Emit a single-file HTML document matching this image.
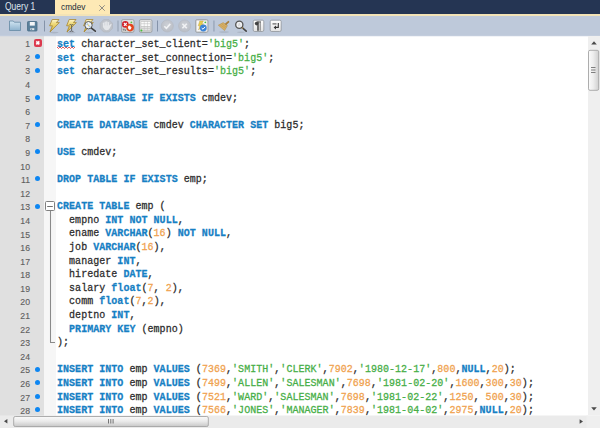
<!DOCTYPE html>
<html><head><meta charset="utf-8">
<style>
*{margin:0;padding:0;box-sizing:border-box}
html,body{width:600px;height:428px;overflow:hidden;background:#fff;position:relative}
body{font-family:"Liberation Sans",sans-serif}
.abs{position:absolute}
#tabbar{left:0;top:0;width:600px;height:14px;background:#253553}
#tab1{left:5px;top:0px;font-size:10px;color:#dfe6ee;line-height:13px;transform:scaleX(0.85);transform-origin:0 0;white-space:nowrap}
#tab2{left:55px;top:0;width:55px;height:14px;background:#fde9b5}
#tab2 .t{position:absolute;left:5.6px;top:0.5px;font-size:9px;color:#222c3a;line-height:13px;transform:scaleX(0.92);transform-origin:0 0}
#tab2 .x{position:absolute;left:44px;top:5px;width:6px;height:6px}
#yline{left:0;top:14px;width:600px;height:2px;background:#f3e3b6}
#toolbar{left:0;top:16px;width:600px;height:20px;background:#bec9da}
#gut1{left:0;top:36px;width:44px;height:380px;background:#e0e0e0}
#gut2{left:44px;top:36px;width:12px;height:380px;background:#f6f6f6}
.nl{position:absolute;left:0;width:30px;text-align:right;font-family:"Liberation Sans",sans-serif;font-size:8.7px;line-height:13.56px;color:#5e5e5e;-webkit-text-stroke:0.12px}
#code{left:57px;top:0;font-family:"Liberation Mono",monospace;font-size:10px;letter-spacing:0.034px;line-height:13.56px;color:#2b2b2b;white-space:pre;-webkit-text-stroke:0.25px}
.cl{position:absolute;left:0;white-space:pre;transform:scaleY(1.1);transform-origin:0 10px}
#code i{font-style:normal}
.k{color:#1680c4;font-weight:bold}
.n{color:#f0a24e}
.s{color:#46ae46}
.dot{position:absolute;left:35.1px;width:5px;height:5px;border-radius:50%;background:#0d86f2}
#err{left:34px;top:39px;width:7.6px;height:7.8px;border-radius:2px;background:#dc3a4e}
#vsb{left:588px;top:36px;width:12px;height:379px;background:#eaeaea}
#hsb{left:0;top:415px;width:588px;height:13px;background:#eaeaea}
#corner{left:588px;top:415px;width:12px;height:13px;background:#eeeeee}
</style></head><body>
<div id="tabbar" class="abs"></div>
<div id="tab1" class="abs">Query 1</div>
<div id="tab2" class="abs"><span class="t">cmdev</span>
<svg class="x" viewBox="0 0 6 6"><path d="M0.3 0.3L5.7 5.7M5.7 0.3L0.3 5.7" stroke="#7c7c7c" stroke-width="0.85"/></svg></div>
<div id="yline" class="abs"></div>
<div id="toolbar" class="abs"></div>
<div class="abs" style="left:0;top:35px;width:600px;height:1px;background:#c3cddd"></div>
<svg class="abs" style="left:0;top:16px" width="300" height="20" viewBox="0 16 300 20">
<defs>
<linearGradient id="gy" x1="0" y1="0" x2="0" y2="1"><stop offset="0" stop-color="#fdf6d2"/><stop offset="0.35" stop-color="#efd978"/><stop offset="1" stop-color="#d6b43c"/></linearGradient>
<linearGradient id="gf" x1="0" y1="0" x2="0" y2="1"><stop offset="0" stop-color="#d2e5f2"/><stop offset="1" stop-color="#8db2cd"/></linearGradient>
<linearGradient id="gb" x1="0" y1="0" x2="0" y2="1"><stop offset="0" stop-color="#ffffff"/><stop offset="1" stop-color="#e2e2e2"/></linearGradient>
<linearGradient id="gg" x1="0" y1="0" x2="0" y2="1"><stop offset="0" stop-color="#e6e6e6"/><stop offset="1" stop-color="#cfcfcf"/></linearGradient>
<radialGradient id="gc" cx="0.5" cy="0.4" r="0.6"><stop offset="0" stop-color="#cdd0d6"/><stop offset="1" stop-color="#b9bdc5"/></radialGradient>
</defs>
<!-- folder -->
<path d="M9.5 21 h3.8 l1 1.2 h6.2 v8.3 h-11 z" fill="url(#gf)" stroke="#6d90a9" stroke-width="0.9"/>
<!-- save -->
<rect x="27.5" y="21.5" width="9.5" height="9.5" rx="0.8" fill="#587f9b" stroke="#4a6d86" stroke-width="0.8"/>
<rect x="29.8" y="22" width="5" height="3.6" fill="#f4f6f8"/>
<rect x="30.3" y="28.2" width="4" height="2" fill="#e0e6ea"/>
<rect x="31.2" y="28.6" width="0.9" height="1.3" fill="#587f9b"/>
<!-- seps -->
<rect x="44" y="20.5" width="1" height="11" fill="#8593a9"/>
<rect x="117.2" y="20.5" width="1.6" height="11" fill="#a3aec0"/>
<rect x="157" y="20.5" width="1" height="11" fill="#8593a9"/>
<rect x="213.4" y="20.5" width="1.1" height="11" fill="#909db2"/>
<ellipse cx="54" cy="32.6" rx="4.5" ry="0.8" fill="#aab4c4"/>
<ellipse cx="71" cy="32.6" rx="4.5" ry="0.8" fill="#aab4c4"/>
<ellipse cx="89" cy="32.6" rx="4.5" ry="0.8" fill="#aab4c4"/>
<g transform="translate(49,19)">
<path d="M3.2 0.5 L10 0.5 L7.4 3.6 L10.3 3.6 L1 13 L3.4 6.8 L0.6 6.8 Z" fill="url(#gy)" stroke="#a8862e" stroke-width="0.8" stroke-linejoin="round"/></g>
<g transform="translate(66,19)">
<path d="M3.2 0.5 L10 0.5 L7.4 3.6 L10.3 3.6 L1 13 L3.4 6.8 L0.6 6.8 Z" fill="url(#gy)" stroke="#a8862e" stroke-width="0.8" stroke-linejoin="round"/></g>
<path d="M69.6 24.6 h1.2 q0.6 0 0.8 0.6 q0.2 -0.6 0.8 -0.6 h1 M71.6 25.2 v5.6 M69.6 31.4 h1.2 q0.6 0 0.8 -0.6 q0.2 0.6 0.8 0.6 h1" stroke="#5a5a5a" stroke-width="0.9" fill="none"/>
<g transform="translate(83,19)">
<path d="M3.2 0.5 L10 0.5 L7.4 3.6 L10.3 3.6 L1 13 L3.4 6.8 L0.6 6.8 Z" fill="url(#gy)" stroke="#a8862e" stroke-width="0.8" stroke-linejoin="round"/></g>
<circle cx="88.5" cy="25.2" r="3.7" fill="#eef2f4" stroke="#5a5a5a" stroke-width="1"/>
<circle cx="87.4" cy="24.2" r="0.9" fill="#a9c6e2"/>
<circle cx="89.6" cy="26.4" r="0.9" fill="#a9c6e2"/>
<circle cx="88.5" cy="25.4" r="0.8" fill="#e8d27a"/>
<path d="M91.4 28.2 L95.3 31.2" stroke="#3f3f3f" stroke-width="1.6" stroke-linecap="round"/>
<!-- stop disabled -->
<path d="M103.7 19.6 h5.2 l3.6 3.6 v5.2 l-3.6 3.6 h-5.2 l-3.6 -3.6 v-5.2 z" fill="#bfc3ca" stroke="#b0b5bd" stroke-width="0.6"/>
<g fill="#e4e6e9">
<rect x="102.9" y="22.6" width="1.4" height="5" rx="0.7"/>
<rect x="104.5" y="21.4" width="1.4" height="5.5" rx="0.7"/>
<rect x="106.1" y="21.2" width="1.4" height="5.5" rx="0.7"/>
<rect x="107.7" y="21.9" width="1.4" height="5" rx="0.7"/>
<path d="M102.9 25.5 h6.2 l1.6 -1.4 q0.8 -0.4 1 0.4 l-1.8 3.4 q-1 2.4 -3.2 2.4 q-2.2 0 -3 -2 z"/>
</g>
<!-- stop-on-error toggle -->
<rect x="121.6" y="19.6" width="12.4" height="12.8" rx="1.5" fill="url(#gg)" stroke="#8e9297" stroke-width="0.7"/>
<path d="M122.8 29.2 h1 v1.4 M124.6 29.2 q0.8 0 0.8 0.8 v1" stroke="#555" stroke-width="0.7" fill="none"/>
<circle cx="125.3" cy="24.4" r="3.3" fill="#cf1f2a"/>
<path d="M123.9 23 L126.7 25.8 M126.7 23 L123.9 25.8" stroke="#fff" stroke-width="1.1"/>
<circle cx="130.1" cy="27.6" r="3.8" fill="#e4451e"/>
<path d="M128.8 29.6 q-0.8 -0.8 -0.8 -2 v-1.4 h0.8 v-0.6 h0.9 v0.4 h0.9 v1.2 q0.6 -0.3 1 0.2 l-0.9 1.8 q-0.5 0.6 -1.2 0.6 z" fill="#fff"/>
<circle cx="131.4" cy="22.3" r="0.9" fill="#55c23a"/>
<!-- grid toggle -->
<rect x="139.4" y="19.6" width="12.6" height="12.8" rx="1.5" fill="url(#gg)" stroke="#8e9297" stroke-width="0.7"/>
<rect x="140.8" y="21.2" width="9.8" height="9.6" fill="#b9b9b9"/>
<g fill="#fafafa">
<rect x="141.2" y="21.7" width="2.7" height="1.9"/><rect x="144.3" y="21.7" width="2.7" height="1.9"/><rect x="147.4" y="21.7" width="2.8" height="1.9"/>
<rect x="141.2" y="24.1" width="2.7" height="1.9"/><rect x="144.3" y="24.1" width="2.7" height="1.9"/><rect x="147.4" y="24.1" width="2.8" height="1.9"/>
</g>
<g fill="#e2e2e2">
<rect x="141.2" y="26.5" width="2.7" height="1.7"/><rect x="144.3" y="26.5" width="2.7" height="1.7"/><rect x="147.4" y="26.5" width="2.8" height="1.7"/>
<rect x="141.2" y="28.6" width="2.7" height="1.8"/><rect x="144.3" y="28.6" width="2.7" height="1.8"/><rect x="147.4" y="28.6" width="2.8" height="1.8"/>
</g>
<circle cx="141.4" cy="30.4" r="1" fill="#45bf36"/>
<!-- commit disabled -->
<circle cx="167.3" cy="26" r="6.1" fill="url(#gc)" stroke="#b3b7bf" stroke-width="0.5"/>
<path d="M164.3 26.2 L166.4 28.3 L170.3 23.9" stroke="#f1f2f4" stroke-width="1.6" fill="none"/>
<!-- rollback disabled -->
<circle cx="184.6" cy="26" r="6.1" fill="url(#gc)" stroke="#b3b7bf" stroke-width="0.5"/>
<path d="M182.4 23.8 L186.8 28.2 M186.8 23.8 L182.4 28.2" stroke="#f1f2f4" stroke-width="1.6"/>
<!-- autocommit -->
<rect x="195.6" y="19.6" width="12.4" height="12.8" rx="1.5" fill="#dcdcdc" stroke="#8e9297" stroke-width="0.7"/>
<rect x="197" y="21" width="9.6" height="10" fill="#f6f6f6"/>
<path d="M199.8 21 L203.4 21 L201.8 23.8 L203.6 23.8 L198.6 30 L199.8 25.8 L198.2 25.8 Z" fill="#e8cc4c" stroke="#c0a040" stroke-width="0.4"/>
<circle cx="203.3" cy="28" r="3.4" fill="#3d84d6"/>
<path d="M201.7 28.1 L203 29.2 L205 26.9" stroke="#fff" stroke-width="1" fill="none"/>
<circle cx="205.3" cy="22.3" r="0.9" fill="#4bbf3a"/>
<!-- broom -->
<ellipse cx="224" cy="32" rx="5" ry="0.8" fill="#aab4c4"/>
<path d="M218.3 25.2 L223.2 22.6 L227.4 25.6 L224.6 30.6 Z" fill="#d8b065" stroke="#b08a48" stroke-width="0.5"/>
<path d="M220.4 25 L225.4 28.4 M221.8 24 L226.4 27" stroke="#bb9552" stroke-width="0.5"/>
<path d="M226 24 L228.4 21.8" stroke="#a88040" stroke-width="1.8" stroke-linecap="round"/>
<!-- magnifier -->
<ellipse cx="241" cy="32.2" rx="4" ry="0.7" fill="#aeb7c6"/>
<circle cx="239.3" cy="24.8" r="3.6" fill="#f0f1f3" stroke="#545454" stroke-width="1.3"/>
<path d="M238.3 26.3 L239.3 23.2 L240.3 26.3" stroke="#c8c8c8" stroke-width="0.6" fill="none"/>
<path d="M242.2 27.7 L246.2 31.2" stroke="#444" stroke-width="1.6" stroke-linecap="round"/>
<circle cx="242.5" cy="28" r="0.7" fill="#c09a50"/>
<!-- pilcrow -->
<rect x="253.2" y="20.2" width="10.6" height="11.3" rx="1.5" fill="url(#gb)" stroke="#8f949b" stroke-width="0.8"/>
<circle cx="256.6" cy="23.6" r="1.8" fill="#444"/>
<rect x="257.3" y="21.5" width="1.4" height="9.3" fill="#3a3a3a"/>
<rect x="259.6" y="21.5" width="1.2" height="9.3" fill="#8a8a8a"/>
<rect x="256.6" y="21.5" width="4.2" height="0.9" fill="#555"/>
<!-- wrap -->
<rect x="270.2" y="20.2" width="11" height="11.3" rx="1.5" fill="url(#gb)" stroke="#8f949b" stroke-width="0.8"/>
<path d="M272.5 23.9 h4" stroke="#555" stroke-width="1.1"/>
<path d="M278.3 23 v4.4 h-3" stroke="#333" stroke-width="1.1" fill="none"/>
<path d="M273.6 27.4 L276 25.4 L276 29.4 Z" fill="#333"/>
</svg>
<div id="gut1" class="abs"></div>
<div id="gut2" class="abs"></div>
<div class="abs" style="left:0;top:36px;width:588px;height:1px;background:rgba(190,200,218,0.22)"></div>
<div class="nl" style="top:38px">1</div><div class="nl" style="top:52px">2</div><div class="nl" style="top:65px">3</div><div class="nl" style="top:79px">4</div><div class="nl" style="top:93px">5</div><div class="nl" style="top:106px">6</div><div class="nl" style="top:120px">7</div><div class="nl" style="top:133px">8</div><div class="nl" style="top:147px">9</div><div class="nl" style="top:161px">10</div><div class="nl" style="top:174px">11</div><div class="nl" style="top:188px">12</div><div class="nl" style="top:201px">13</div><div class="nl" style="top:215px">14</div><div class="nl" style="top:229px">15</div><div class="nl" style="top:242px">16</div><div class="nl" style="top:256px">17</div><div class="nl" style="top:269px">18</div><div class="nl" style="top:283px">19</div><div class="nl" style="top:296px">20</div><div class="nl" style="top:310px">21</div><div class="nl" style="top:324px">22</div><div class="nl" style="top:337px">23</div><div class="nl" style="top:351px">24</div><div class="nl" style="top:364px">25</div><div class="nl" style="top:378px">26</div><div class="nl" style="top:392px">27</div><div class="nl" style="top:405px">28</div>
<div id="err" class="abs"><svg width="8" height="8" viewBox="0 0 8 8" style="display:block"><path d="M2.3 2.4L5.3 5.4M5.3 2.4L2.3 5.4" stroke="#fff" stroke-width="1.6"/></svg></div>
<div class="dot" style="top:54.03px"></div><div class="dot" style="top:67.62px"></div><div class="dot" style="top:94.80px"></div><div class="dot" style="top:121.98px"></div><div class="dot" style="top:149.16px"></div><div class="dot" style="top:176.34px"></div><div class="dot" style="top:203.52px"></div><div class="dot" style="top:366.60px"></div><div class="dot" style="top:380.19px"></div><div class="dot" style="top:393.78px"></div><div class="dot" style="top:407.37px"></div>
<svg class="abs" style="left:44px;top:200px" width="14" height="145" viewBox="44 200 14 145">
<rect x="45.5" y="201.5" width="9" height="9" rx="1" fill="#fff" stroke="#808080" stroke-width="1"/>
<path d="M47.2 206.5 h5.6" stroke="#606060" stroke-width="0.9"/>
<path d="M50.5 211 V342.5 H55" stroke="#8a8a8a" stroke-width="1.05" fill="none"/>
</svg>
<svg class="abs" style="left:57px;top:46.3px" width="20" height="4" viewBox="0 0 20 4"><path d="M0 1 L1.5 2.5 L3 1 L4.5 2.5 L6 1 L7.5 2.5 L9 1 L10.5 2.5 L12 1 L13.5 2.5 L15 1 L16.5 2.5 L18 1" stroke="#e03030" stroke-width="0.8" fill="none"/></svg>
<div id="code" class="abs"><div class="cl" style="top:38px"><b class="k">set</b> character_set_client=<i class="s">'big5'</i>;</div><div class="cl" style="top:52px"><b class="k">set</b> character_set_connection=<i class="s">'big5'</i>;</div><div class="cl" style="top:65px"><b class="k">set</b> character_set_results=<i class="s">'big5'</i>;</div><div class="cl" style="top:92px"><b class="k">DROP DATABASE IF EXISTS</b> cmdev;</div><div class="cl" style="top:119px"><b class="k">CREATE DATABASE</b> cmdev <b class="k">CHARACTER SET</b> big5;</div><div class="cl" style="top:146px"><b class="k">USE</b> cmdev;</div><div class="cl" style="top:173px"><b class="k">DROP TABLE IF EXISTS</b> emp;</div><div class="cl" style="top:200px"><b class="k">CREATE TABLE</b> emp (</div><div class="cl" style="top:214px">  empno <b class="k">INT NOT NULL</b>,</div><div class="cl" style="top:227px">  ename <b class="k">VARCHAR</b>(<i class="n">16</i>) <b class="k">NOT NULL</b>,</div><div class="cl" style="top:241px">  job <b class="k">VARCHAR</b>(<i class="n">16</i>),</div><div class="cl" style="top:255px">  manager <b class="k">INT</b>,</div><div class="cl" style="top:268px">  hiredate <b class="k">DATE</b>,</div><div class="cl" style="top:282px">  salary <b class="k">float</b>(<i class="n">7</i>, <i class="n">2</i>),</div><div class="cl" style="top:295px">  comm <b class="k">float</b>(<i class="n">7</i>,<i class="n">2</i>),</div><div class="cl" style="top:309px">  deptno <b class="k">INT</b>,</div><div class="cl" style="top:323px">  <b class="k">PRIMARY KEY</b> (empno)</div><div class="cl" style="top:336px">);</div><div class="cl" style="top:363px"><b class="k">INSERT INTO</b> emp <b class="k">VALUES</b> (<i class="n">7369</i>,<i class="s">'SMITH'</i>,<i class="s">'CLERK'</i>,<i class="n">7902</i>,<i class="s">'1980-12-17'</i>,<i class="n">800</i>,<b class="k">NULL</b>,<i class="n">20</i>);</div><div class="cl" style="top:377px"><b class="k">INSERT INTO</b> emp <b class="k">VALUES</b> (<i class="n">7499</i>,<i class="s">'ALLEN'</i>,<i class="s">'SALESMAN'</i>,<i class="n">7698</i>,<i class="s">'1981-02-20'</i>,<i class="n">1600</i>,<i class="n">300</i>,<i class="n">30</i>);</div><div class="cl" style="top:391px"><b class="k">INSERT INTO</b> emp <b class="k">VALUES</b> (<i class="n">7521</i>,<i class="s">'WARD'</i>,<i class="s">'SALESMAN'</i>,<i class="n">7698</i>,<i class="s">'1981-02-22'</i>,<i class="n">1250</i>, <i class="n">500</i>,<i class="n">30</i>);</div><div class="cl" style="top:404px"><b class="k">INSERT INTO</b> emp <b class="k">VALUES</b> (<i class="n">7566</i>,<i class="s">'JONES'</i>,<i class="s">'MANAGER'</i>,<i class="n">7839</i>,<i class="s">'1981-04-02'</i>,<i class="n">2975</i>,<b class="k">NULL</b>,<i class="n">20</i>);</div></div>
<svg class="abs" style="left:0;top:0" width="600" height="428" viewBox="0 0 600 428">
<defs>
<linearGradient id="tv" x1="0" y1="0" x2="1" y2="0"><stop offset="0" stop-color="#fbfbfb"/><stop offset="0.45" stop-color="#eeeeee"/><stop offset="1" stop-color="#cfcfcf"/></linearGradient>
<linearGradient id="th" x1="0" y1="0" x2="0" y2="1"><stop offset="0" stop-color="#fafafa"/><stop offset="0.45" stop-color="#ececec"/><stop offset="1" stop-color="#c9c9c9"/></linearGradient>
</defs>
<rect x="588" y="36" width="12" height="379.5" fill="#efefef"/>
<rect x="0" y="415.5" width="588" height="12.5" fill="#ebebeb"/>
<rect x="586.5" y="415.5" width="13.5" height="12.5" fill="#efefef"/>
<path d="M594 41.2 L596.8 44.4 L591.2 44.4 Z" fill="#4a4a4a"/>
<path d="M594 410.4 L596.8 407.3 L591.2 407.3 Z" fill="#4a4a4a"/>
<rect x="588.5" y="50.3" width="10.2" height="40" rx="1.5" fill="url(#tv)" stroke="#a5a5a5" stroke-width="0.9"/>
<path d="M591 67.5 h4.5 M591 70 h4.5 M591 72.5 h4.5" stroke="#5a5a5a" stroke-width="0.75"/>
<path d="M4 421.3 L7.4 419 L7.4 423.6 Z" fill="#4a4a4a"/>
<path d="M583 421.5 L579.6 419.2 L579.6 423.8 Z" fill="#4a4a4a"/>
<rect x="13.7" y="416.5" width="194.6" height="10" rx="1.5" fill="url(#th)" stroke="#a5a5a5" stroke-width="0.9"/>
<path d="M108.5 419 v4.5 M110.8 419 v4.5 M113.1 419 v4.5" stroke="#555" stroke-width="0.8"/>
</svg>
</body></html>
